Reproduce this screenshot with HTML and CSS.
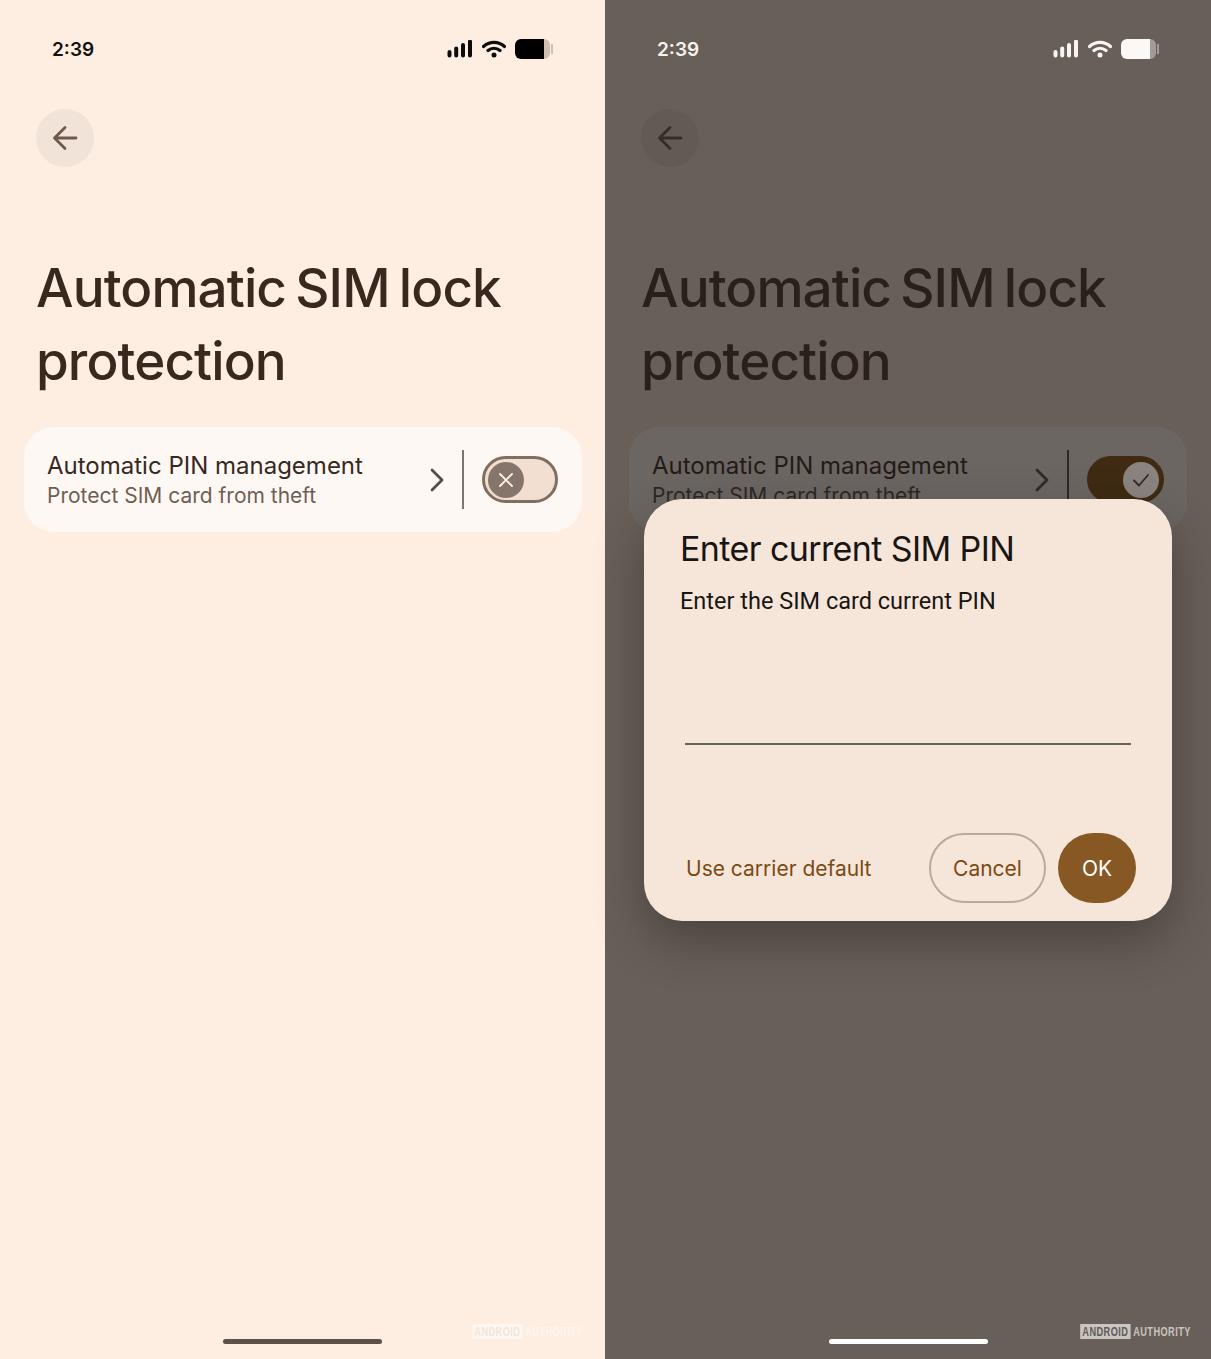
FILE: index.html
```html
<!DOCTYPE html>
<html lang="en">
<head>
  <meta charset="UTF-8">
  <meta name="viewport" content="width=device-width, initial-scale=1.0">
  <title>Automatic SIM lock protection</title>
  <link rel="stylesheet" href="styles.css">
</head>
<body>
  <div class="screens">

    <!-- left: setting turned off -->
    <section class="phone">
      <div class="status-bar">
        <span class="time">2:39</span>
        <div class="status-icons">
          <svg class="icon-signal" width="26" height="18" viewBox="0 0 26 18"><path d="M2.500 12v3.500M9.200 8.500v7M16 5v10.500M23 1.500v14" /></svg>
          <svg class="icon-wifi" width="24" height="18" viewBox="0 0 24 18"><path d="M1.500 6.500C7.500 1 16.500 1 22.500 6.500M6 10.500C9.500 7.500 14.500 7.500 18 10.500" /><circle cx="12" cy="15" r="2.500" /></svg>
          <div class="battery"><div class="battery-level"></div><div class="battery-rest"></div><div class="battery-tip"></div></div>
        </div>
      </div>
      <button class="back-btn" aria-label="Back">
        <svg width="28" height="28" viewBox="0 0 28 28"><path d="M25 14H4M14 3.500 3.500 14 14 24.500" /></svg>
      </button>
      <h1>Automatic SIM lock protection</h1>
      <div class="card">
        <div class="card-text">
          <div class="card-title">Automatic PIN management</div>
          <div class="card-sub">Protect SIM card from theft</div>
        </div>
        <svg class="chevron" width="14" height="24" viewBox="0 0 14 24"><path d="M2 2l10 10L2 22" /></svg>
        <div class="card-divider"></div>
        <div class="toggle">
          <div class="toggle-thumb">
            <svg width="16" height="16" viewBox="0 0 16 16"><path d="M2 2l12 12M14 2 2 14" /></svg>
          </div>
        </div>
      </div>
      <div class="watermark"><span class="wm-box">ANDROID</span> AUTHORITY</div>
      <div class="home-bar"></div>
    </section>

    <!-- right: same page dimmed, with the PIN dialog on top -->
    <section class="phone dim">
      <div class="status-bar">
        <span class="time">2:39</span>
        <div class="status-icons">
          <svg class="icon-signal" width="26" height="18" viewBox="0 0 26 18"><path d="M2.500 12v3.500M9.200 8.500v7M16 5v10.500M23 1.500v14" /></svg>
          <svg class="icon-wifi" width="24" height="18" viewBox="0 0 24 18"><path d="M1.500 6.500C7.500 1 16.500 1 22.500 6.500M6 10.500C9.500 7.500 14.500 7.500 18 10.500" /><circle cx="12" cy="15" r="2.500" /></svg>
          <div class="battery"><div class="battery-level"></div><div class="battery-rest"></div><div class="battery-tip"></div></div>
        </div>
      </div>
      <button class="back-btn" aria-label="Back">
        <svg width="28" height="28" viewBox="0 0 28 28"><path d="M25 14H4M14 3.500 3.500 14 14 24.500" /></svg>
      </button>
      <h1>Automatic SIM lock protection</h1>
      <div class="card">
        <div class="card-text">
          <div class="card-title">Automatic PIN management</div>
          <div class="card-sub">Protect SIM card from theft</div>
        </div>
        <svg class="chevron" width="14" height="24" viewBox="0 0 14 24"><path d="M2 2l10 10L2 22" /></svg>
        <div class="card-divider"></div>
        <div class="toggle on">
          <div class="toggle-thumb">
            <svg width="18" height="16" viewBox="0 0 18 16"><path d="M2 8.500l5 5L16 3" /></svg>
          </div>
        </div>
      </div>
      <div class="watermark"><span class="wm-box">ANDROID</span> AUTHORITY</div>
      <div class="home-bar"></div>

      <div class="dialog">
        <h2>Enter current SIM PIN</h2>
        <p>Enter the SIM card current PIN</p>
        <div class="pin-line"></div>
        <div class="dialog-actions">
          <button class="link-btn">Use carrier default</button>
          <button class="cancel-btn">Cancel</button>
          <button class="ok-btn">OK</button>
        </div>
      </div>
    </section>

  </div>
</body>
</html>
```

FILE: styles.css
```css
body {
    margin: 0;
    font-family: Inter, "Open Sans", sans-serif;
    background-color: #fff;
}

.screens {
    display: flex;
    height: 1359px;
}

.phone {
    position: relative;
    display: flex;
    flex-direction: column;
    width: 605px;
    background-color: #feede1;
    color: #38291f;
}

.phone.dim {
    width: 606px;
    background-color: #695f59;
    color: #2a201a;
}

/* status bar */
.status-bar {
    display: flex;
    justify-content: space-between;
    align-items: center;
    height: 40px;
    margin-top: 29px;
    padding: 0 52px;
}

.time {
    font-size: 19px;
    font-weight: 600;
    color: #111;
}

.status-icons {
    display: flex;
    align-items: center;
    gap: 9px;
}

.icon-signal path {
    fill: none;
    stroke: #0c0c0c;
    stroke-width: 4;
    stroke-linecap: round;
}

.icon-wifi path {
    fill: none;
    stroke: #0c0c0c;
    stroke-width: 3.2;
    stroke-linecap: round;
}

.icon-wifi circle {
    fill: #0c0c0c;
}

.battery {
    display: flex;
    align-items: center;
    height: 20px;
}

.battery-level {
    width: 29px;
    height: 20px;
    background-color: #000;
    border-radius: 6px 0 0 6px;
}

.battery-rest {
    width: 6px;
    height: 20px;
    background-color: #cdbfb2;
    border-radius: 0 6px 6px 0;
}

.battery-tip {
    width: 2px;
    height: 10px;
    margin-left: 1px;
    background-color: #cdbfb2;
}

.dim .time {
    color: #f6f2ee;
}

.dim .icon-signal path,
.dim .icon-wifi path {
    stroke: #f8f6f3;
}

.dim .icon-wifi circle {
    fill: #f8f6f3;
}

.dim .battery-level {
    background-color: #fbf9f7;
}

.dim .battery-rest,
.dim .battery-tip {
    background-color: #a39c96;
}

/* header */
.back-btn {
    display: flex;
    align-items: center;
    justify-content: center;
    width: 58px;
    height: 58px;
    margin: 40px 0 0 36px;
    padding: 0;
    border: 0;
    border-radius: 50%;
    background-color: #f2e3d8;
}

.back-btn svg path {
    fill: none;
    stroke: #6d5a4c;
    stroke-width: 2.800;
    stroke-linecap: round;
    stroke-linejoin: round;
}

.dim .back-btn {
    background-color: #625a55;
}

.dim .back-btn svg path {
    stroke: #362c26;
}

h1 {
    width: 500px;
    margin: 85px 0 0 36px;
    font-size: 53px;
    font-weight: 450;
    line-height: 73px;
    letter-spacing: -0.900px;
    word-spacing: -4px;
}

/* settings row */
.card {
    display: flex;
    align-items: center;
    height: 105px;
    margin: 29px 23px 0 24px;
    padding: 0 24px 0 23px;
    background-color: #fef8f4;
    border-radius: 30px;
}

.dim .card {
    margin-right: 24px;
    padding-right: 23px;
    background-color: #6c6663;
}

.card-text {
    flex: 1;
    padding-top: 1px;
}

.card-title {
    font-size: 24px;
    font-weight: 420;
    line-height: 30px;
    color: #38291f;
}

.card-sub {
    font-size: 21px;
    line-height: 29px;
    color: #6e5f54;
}

.dim .card-title {
    color: #241b15;
}

.dim .card-sub {
    color: #2e2824;
}

.chevron path {
    fill: none;
    stroke: #514a45;
    stroke-width: 2.800;
    stroke-linecap: round;
    stroke-linejoin: round;
}

.dim .chevron path {
    stroke: #2f2a27;
}

.card-divider {
    width: 2px;
    height: 59px;
    margin: 0 18px;
    background-color: #7d746d;
}

.dim .card-divider {
    background-color: #2d2825;
}

.toggle {
    display: flex;
    align-items: center;
    box-sizing: border-box;
    width: 76px;
    height: 47px;
    padding: 0 3px;
    border: 3px solid #7f6f62;
    border-radius: 24px;
    background-color: #f2dfd1;
}

.toggle-thumb {
    display: flex;
    align-items: center;
    justify-content: center;
    width: 36px;
    height: 36px;
    border-radius: 50%;
    background-color: #86756a;
}

.toggle-thumb svg path {
    fill: none;
    stroke: #fbf3ec;
    stroke-width: 1.800;
    stroke-linecap: round;
    stroke-linejoin: round;
}

.toggle.on {
    justify-content: flex-end;
    width: 77px;
    padding: 0 2px;
    border-color: #3f2b13;
    background-color: #3f2b13;
}

.toggle.on .toggle-thumb {
    background-color: #8a8480;
}

.toggle.on .toggle-thumb svg path {
    stroke: #3a2a20;
}

/* bottom */
.home-bar {
    width: 159px;
    height: 5px;
    margin: auto auto 15px;
    border-radius: 3px;
    background-color: #5c5048;
}

.dim .home-bar {
    background-color: #fff;
}

/* no condensed family installed, so squeeze it */
.watermark {
    position: absolute;
    right: 22px;
    bottom: 20px;
    font-family: "Liberation Sans", sans-serif;
    font-size: 13px;
    font-weight: 700;
    letter-spacing: 0.600px;
    color: #fff7f1;
    transform: scaleX(0.71);
    transform-origin: right center;
}

.wm-box {
    padding: 0 3px;
    background-color: #fff7f1;
    color: #f3e4d8;
}

.dim .watermark {
    right: 20px;
    color: #c9c5c1;
}

.dim .wm-box {
    background-color: #c9c5c1;
    color: #625a55;
}

/* dialog */
.dialog {
    position: absolute;
    left: 39px;
    top: 499px;
    display: flex;
    flex-direction: column;
    box-sizing: border-box;
    width: 528px;
    height: 422px;
    padding: 28px 36px 18px 36px;
    border-radius: 38px;
    background-color: #f6e6da;
    box-shadow: 0 20px 50px rgba(0, 0, 0, 0.3);
    color: #191512;
}

.dialog h2 {
    margin: 0;
    font-size: 34px;
    font-weight: 400;
    line-height: 44px;
    letter-spacing: -0.600px;
}

.dialog p {
    margin: 14px 0 0;
    font-family: Roboto, sans-serif;
    font-size: 23.500px;
    line-height: 32px;
}

.pin-line {
    height: 2px;
    margin: 126px 5px 0;
    background-color: #6a635b;
}

.dialog-actions {
    display: flex;
    align-items: center;
    margin-top: auto;
}

.dialog-actions button {
    font-family: Inter, "Open Sans", sans-serif;
    font-size: 21px;
    height: 70px;
    padding: 0;
    border: 0;
    background: none;
    color: #7a4a15;
}

.dialog-actions .link-btn {
    margin: 0 auto 0 6px;
}

.dialog-actions .cancel-btn {
    width: 117px;
    border: 2px solid #baa99c;
    border-radius: 35px;
}

.dialog-actions .ok-btn {
    width: 78px;
    margin-left: 12px;
    border-radius: 35px;
    background-color: #875724;
    color: #fff;
}
```
